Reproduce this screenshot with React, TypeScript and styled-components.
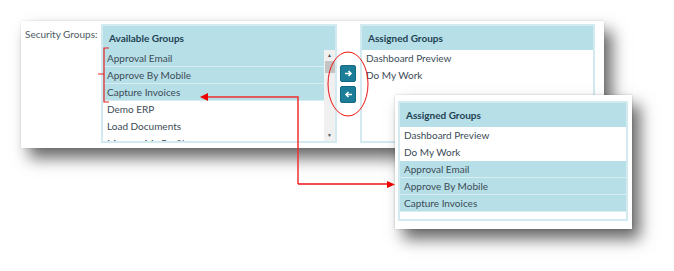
import styled, { createGlobalStyle } from 'styled-components'

const GlobalStyle = createGlobalStyle`
  html, body {
    margin: 0;
    padding: 0;
    background: #ffffff;
  }
  body {
    font-family: Lato, "Open Sans", "Liberation Sans", sans-serif;
  }
`

const available = [
  { label: 'Approval Email', selected: true },
  { label: 'Approve By Mobile', selected: true },
  { label: 'Capture Invoices', selected: true },
  { label: 'Demo ERP', selected: false },
  { label: 'Load Documents', selected: false },
  { label: 'Manage My Profile', selected: false },
]

const assignedBefore = ['Dashboard Preview', 'Do My Work']

const assignedAfter = [
  { label: 'Dashboard Preview', selected: false },
  { label: 'Do My Work', selected: false },
  { label: 'Approval Email', selected: true },
  { label: 'Approve By Mobile', selected: true },
  { label: 'Capture Invoices', selected: true },
]

export default function App() {
  return (
    <>
      <GlobalStyle />
      <Page>
        <Card>
          <FieldLabel>Security Groups:</FieldLabel>
          <Panel $width={236}>
            <PanelHeader>Available Groups</PanelHeader>
            <ListArea $height={91}>
              <Rows>
                {available.map(item => (
                  <Row key={item.label} $selected={item.selected}>{item.label}</Row>
                ))}
              </Rows>
              <Scrollbar>
                <ScrollArrow>▲</ScrollArrow>
                <Thumb />
                <ScrollSpacer />
                <ScrollArrow>▼</ScrollArrow>
              </Scrollbar>
            </ListArea>
          </Panel>
          <MoveButtons>
            <MoveButton aria-label="add">
              <svg width="9" height="9" viewBox="0 0 9 9">
                <path d="M1 4.5 H7 M4.5 2 L7 4.5 L4.5 7" stroke="#fff" strokeWidth="1.6" fill="none" />
              </svg>
            </MoveButton>
            <MoveButton aria-label="remove">
              <svg width="9" height="9" viewBox="0 0 9 9">
                <path d="M8 4.5 H2 M4.5 2 L2 4.5 L4.5 7" stroke="#fff" strokeWidth="1.6" fill="none" />
              </svg>
            </MoveButton>
          </MoveButtons>
          <Panel $width={235}>
            <PanelHeader>Assigned Groups</PanelHeader>
            <ListArea $height={91}>
              <Rows>
                {assignedBefore.map(label => (
                  <Row key={label} $selected={false}>{label}</Row>
                ))}
              </Rows>
            </ListArea>
          </Panel>
        </Card>

        <ResultCard>
          <Panel $width={230}>
            <PanelHeader>Assigned Groups</PanelHeader>
            <ListArea>
              <Rows $padBottom={7}>
                {assignedAfter.map(item => (
                  <Row key={item.label} $selected={item.selected}>{item.label}</Row>
                ))}
              </Rows>
            </ListArea>
          </Panel>
        </ResultCard>

        <Annotations width="674" height="271" viewBox="0 0 674 271">
          <ellipse cx="348" cy="84" rx="20" ry="32" fill="none" stroke="#ee1111" strokeWidth="1" />
          <path d="M109 48 H104 V102 H109 M104 74 H98" fill="none" stroke="#e52222" strokeWidth="1.2" />
          <path d="M298 184 V97 H207" fill="none" stroke="#f03030" strokeWidth="1.5" />
          <polygon points="200,97 208,93 208,101" fill="#ee0000" />
          <path d="M298 184 H388" fill="none" stroke="#ee1111" strokeWidth="1.5" />
          <polygon points="395,184.5 387,181 387,188" fill="#ee0000" />
        </Annotations>
      </Page>
    </>
  )
}

const Page = styled.div`
  position: relative;
  width: 674px;
  height: 271px;
  box-sizing: border-box;
  padding: 21px 0 0 21px;
  background: #ffffff;
  overflow: hidden;
`

const Card = styled.div`
  display: flex;
  align-items: center;
  width: 583px;
  height: 127px;
  box-sizing: border-box;
  padding: 3px 9px 5px 4px;
  background: #ffffff;
  box-shadow: 0 0 2px rgba(0, 0, 0, 0.12), 8px 10px 15px rgba(0, 0, 0, 0.6);
`

const FieldLabel = styled.div`
  align-self: flex-start;
  width: 76px;
  flex-shrink: 0;
  padding-top: 4px;
  font-size: 10px;
  color: #4d5a63;
  white-space: nowrap;
`

const Panel = styled.div<{ $width: number }>`
  width: ${p => p.$width}px;
  flex-shrink: 0;
  box-sizing: border-box;
  border: 2px solid #d2eaf0;
  background: #ffffff;
  display: flex;
  flex-direction: column;
`

const PanelHeader = styled.div`
  height: 24px;
  line-height: 24px;
  padding-left: 6px;
  background: #b6dfe7;
  color: #1f4254;
  font-size: 10px;
  font-weight: 700;
`

const ListArea = styled.div<{ $height?: number }>`
  display: flex;
  height: ${p => (p.$height ? `${p.$height}px` : 'auto')};
  overflow: hidden;
`

const Rows = styled.div<{ $padBottom?: number }>`
  flex: 1;
  display: flex;
  flex-direction: column;
  padding-bottom: ${p => p.$padBottom ?? 0}px;
`

const Row = styled.div<{ $selected: boolean }>`
  height: 17px;
  line-height: 17px;
  padding-left: 4px;
  font-size: 10px;
  color: #3b4b56;
  white-space: nowrap;
  background: ${p => (p.$selected ? '#b6dfe7' : 'transparent')};
  box-shadow: ${p => (p.$selected ? 'inset 0 -1px 0 #d6edf2' : 'none')};
`

const Scrollbar = styled.div`
  width: 11px;
  flex-shrink: 0;
  display: flex;
  flex-direction: column;
  align-items: center;
  background: #f0f0f0;
`

const ScrollArrow = styled.div`
  height: 11px;
  line-height: 11px;
  font-size: 5px;
  color: #505050;
`

const Thumb = styled.div`
  width: 10px;
  height: 12px;
  background: #c4c4c4;
`

const ScrollSpacer = styled.div`
  flex: 1;
`

const MoveButtons = styled.div`
  width: 23px;
  flex-shrink: 0;
  box-sizing: border-box;
  padding-left: 3px;
  display: flex;
  flex-direction: column;
  gap: 4px;
`

const MoveButton = styled.button`
  width: 16px;
  height: 17px;
  padding: 0;
  display: flex;
  align-items: center;
  justify-content: center;
  background: #1b7d97;
  border: 1px solid #146a82;
  border-radius: 2px;
  cursor: pointer;
`

const ResultCard = styled.div`
  position: absolute;
  left: 395px;
  top: 95px;
  width: 237px;
  height: 134px;
  box-sizing: border-box;
  padding: 6px 4px 0 3px;
  background: #ffffff;
  box-shadow: 0 0 2px rgba(0, 0, 0, 0.2), 8px 10px 15px rgba(0, 0, 0, 0.6);
`

const Annotations = styled.svg`
  position: absolute;
  left: 0;
  top: 0;
  pointer-events: none;
`
